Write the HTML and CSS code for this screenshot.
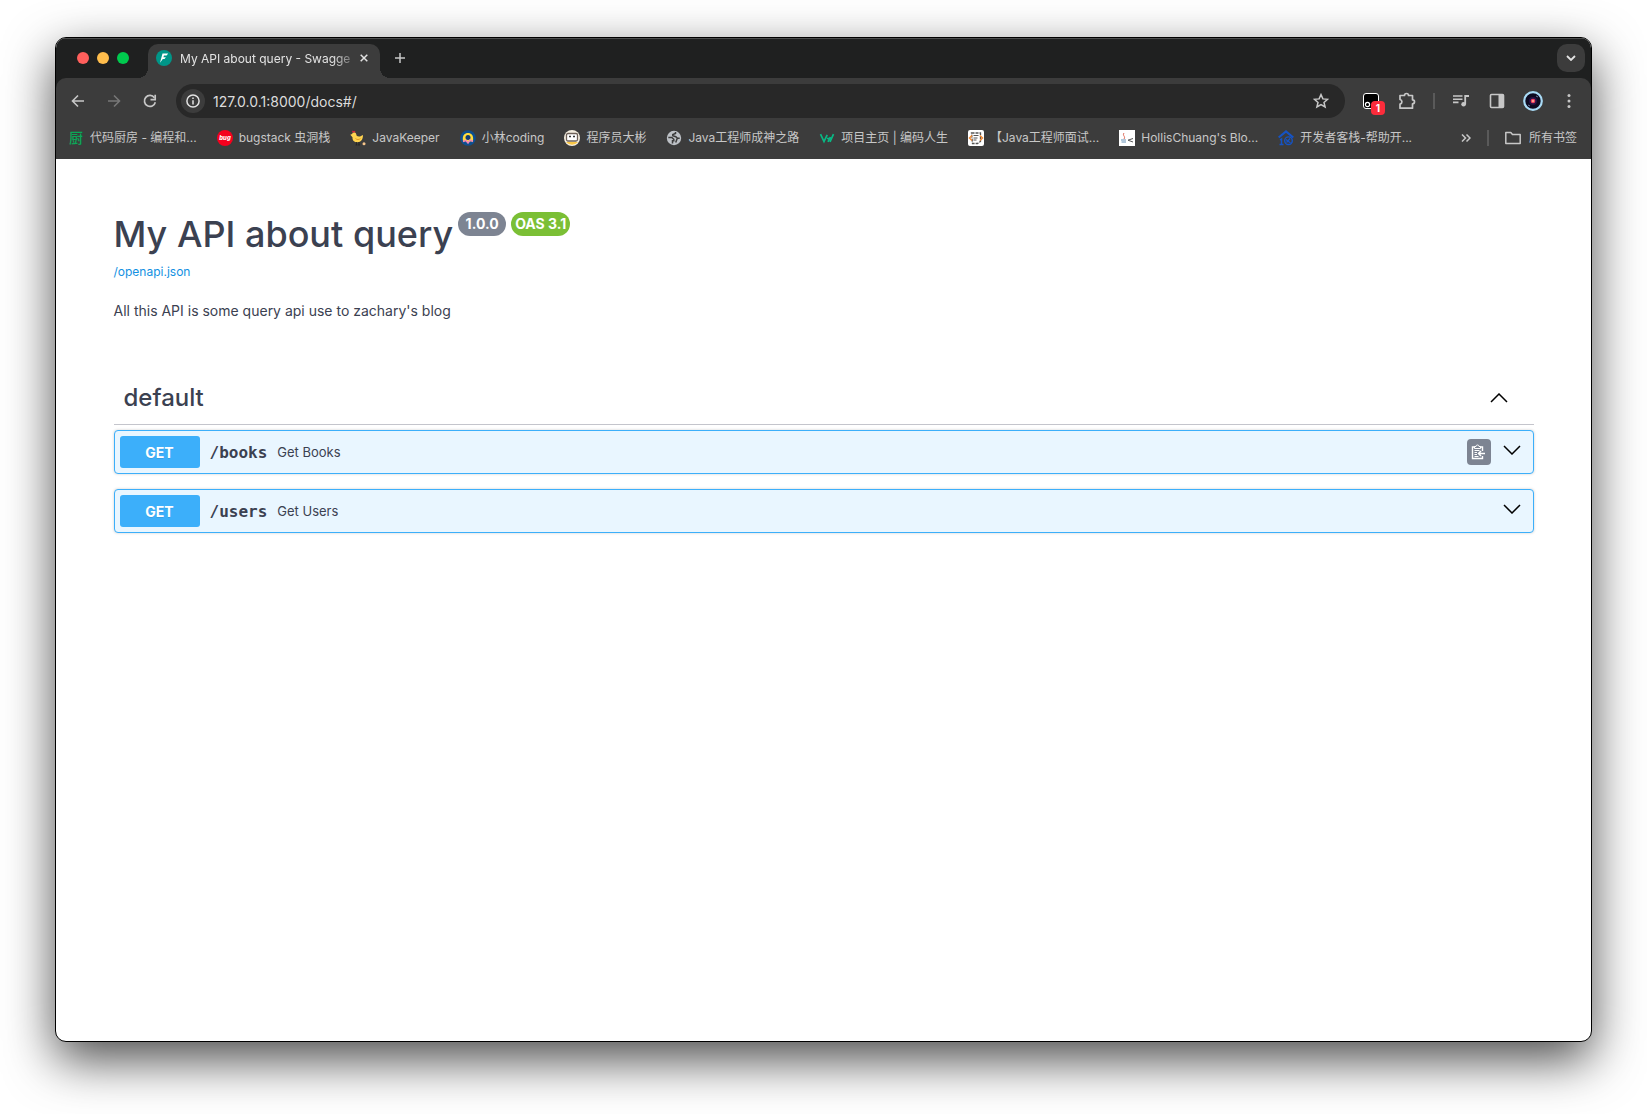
FILE: index.html
```html
<!DOCTYPE html>
<html lang="zh-CN">
<head>
    <meta charset="UTF-8">
    <meta name="viewport" content="width=device-width, initial-scale=1.0">
    <title>My API about query - Swagger UI</title>
    <link rel="stylesheet" href="styles.css">
</head>
<body>
    <div class="browser">
        <div class="chrome">
            <!-- Tab strip -->
            <div class="tab-strip">
                <div class="traffic-lights">
                    <span class="light red"></span>
                    <span class="light yellow"></span>
                    <span class="light green"></span>
                </div>
                <div class="tab">
                    <svg class="icon" viewBox="0 0 16 16"><circle cx="8" cy="8" r="8" fill="#009688"/><path d="M6.500 3.500h5.700l-1.600 2H8l-.6 1.700h2.500L8.500 9H6.800L4 12.800z" fill="#fff"/></svg>
                    <span class="tab-title">My API about query - Swagge</span>
                    <button class="tab-close" aria-label="Close tab">
                        <svg viewBox="0 0 8 8" width="8" height="8"><path d="M.7.7l6.600 6.600M7.300.7L.7 7.300" stroke="#e3e3e3" stroke-width="1.500"/></svg>
                    </button>
                </div>
                <button class="new-tab" aria-label="New tab">
                    <svg viewBox="0 0 10 10" width="10" height="10"><path d="M5 0v10M0 5h10" stroke="#c7c7c7" stroke-width="1.500"/></svg>
                </button>
                <button class="tab-search" aria-label="Search tabs">
                    <svg viewBox="0 0 10 6" width="10" height="6"><path d="M1 1l4 4 4-4" fill="none" stroke="#e3e3e3" stroke-width="1.800"/></svg>
                </button>
            </div>

            <!-- Toolbar -->
            <div class="toolbar">
                <button class="tool-btn" aria-label="Back">
                    <svg class="icon" viewBox="0 0 16 16"><path d="M14 8H3M8 2.500L2.500 8 8 13.500" fill="none" stroke="#c7c7c7" stroke-width="1.600"/></svg>
                </button>
                <button class="tool-btn" aria-label="Forward">
                    <svg class="icon" viewBox="0 0 16 16"><path d="M2 8h11M8 2.500L13.500 8 8 13.500" fill="none" stroke="#777" stroke-width="1.600"/></svg>
                </button>
                <button class="tool-btn" aria-label="Reload">
                    <svg class="icon" viewBox="0 0 16 16"><path d="M13.300 9.200A5.500 5.500 0 1 1 12.400 4.700" fill="none" stroke="#c7c7c7" stroke-width="1.700"/><path d="M13.200 1.700v5H8.500" fill="none" stroke="#c7c7c7" stroke-width="1.700"/></svg>
                </button>
                <div class="omnibox">
                    <button class="site-info" aria-label="Site information">
                        <svg viewBox="0 0 14 14" width="14" height="14"><circle cx="7" cy="7" r="6.100" fill="none" stroke="#e3e3e3" stroke-width="1.500"/><path d="M7 6.200v4.200M7 3.500v1.600" stroke="#e3e3e3" stroke-width="1.500"/></svg>
                    </button>
                    <input class="url" type="text" aria-label="Address" value="127.0.0.1:8000/docs#/">
                    <button class="star" aria-label="Bookmark this tab">
                        <svg class="icon" viewBox="0 0 16 16"><path d="M8 1.600l1.900 4.300 4.700.4-3.600 3.100 1.100 4.600L8 11.600 3.900 14 5 9.400 1.400 6.300l4.700-.4z" fill="none" stroke="#c7c7c7" stroke-width="1.500"/></svg>
                    </button>
                </div>
                <button class="tool-btn extension" aria-label="Extension">
                    <svg class="icon" viewBox="0 0 16 16"><rect x=".5" y=".5" width="15" height="15" rx="2.500" fill="#000" stroke="#fff"/><circle cx="4.500" cy="11.500" r="2.100" fill="none" stroke="#fff" stroke-width="1.200"/></svg>
                    <span class="ext-badge">1</span>
                </button>
                <button class="tool-btn" aria-label="Extensions">
                    <svg viewBox="0 0 18 18" width="18" height="18"><path d="M2 3.500h4.500a2 2 0 0 1 4 0h4v4.300a2 2 0 0 1 0 4v4.400H2v-4a2.400 2.400 0 0 0 0-4.700z" fill="none" stroke="#c7c7c7" stroke-width="1.700" stroke-linejoin="round"/></svg>
                </button>
                <span class="divider tool-divider"></span>
                <button class="tool-btn" aria-label="Media controls">
                    <svg class="icon" viewBox="0 0 16 16"><path d="M0 3h9.500M0 6.200h9.500M0 9.400h5.500" stroke="#c7c7c7" stroke-width="1.600"/><path d="M12.200 11V3H16" fill="none" stroke="#c7c7c7" stroke-width="1.800"/><circle cx="10.600" cy="11.200" r="2.300" fill="#c7c7c7"/></svg>
                </button>
                <button class="tool-btn" aria-label="Side panel">
                    <svg class="icon" viewBox="0 0 16 16"><rect x="1.500" y="1.500" width="13" height="13" rx="1" fill="none" stroke="#c7c7c7" stroke-width="1.600"/><path d="M9.500 1.500h5v13h-5z" fill="#c7c7c7"/></svg>
                </button>
                <button class="tool-btn" aria-label="Profile">
                    <svg viewBox="0 0 20 20" width="20" height="20"><circle cx="10" cy="10" r="8.800" fill="#0d0a20" stroke="#a8daf5" stroke-width="2.200"/><circle cx="10" cy="10" r="4" fill="#2a1245"/><circle cx="10" cy="10" r="2.300" fill="#f0405e"/><circle cx="10" cy="10" r="1" fill="#ffc29a"/><path d="M5 14l2 1M13 5l2 1" stroke="#6c7aa0"/></svg>
                </button>
                <button class="tool-btn" aria-label="Menu">
                    <svg class="icon" viewBox="0 0 16 16" fill="#c7c7c7"><circle cx="8" cy="2.500" r="1.500"/><circle cx="8" cy="8" r="1.500"/><circle cx="8" cy="13.500" r="1.500"/></svg>
                </button>
            </div>

            <!-- Bookmarks -->
            <nav class="bookmarks">
                <a href="#"><span class="icon glyph">厨</span>代码厨房 - 编程和...</a>
                <a href="#">
                    <svg class="icon" viewBox="0 0 16 16"><circle cx="8" cy="8" r="8" fill="#f5001d"/><text x="8" y="10" class="bug-text">bug</text></svg>bugstack 虫洞栈</a>
                <a href="#">
                    <svg class="icon" viewBox="0 0 16 16"><path d="M2 2.500L2.500.5 4 1.200 5 .8l.5 1.700z" fill="#d9263d"/><path d="M.3 4.800L2 4a2.200 2.200 0 0 1 4.300.3c0 1.500 1 2.200 2.700 2.200 1.500 0 2.500-.7 4-1.500 0 4.500-2 7.200-5.500 7.200-3.300 0-5.300-2-5-5z" fill="#ffd34f"/><path d="M5.500 8.500c1.500 1.500 3.500 1.300 5 0" fill="none" stroke="#e09c27"/><path d="M6.500 12v3M9 12v3M5.500 15h2M8 15h2" stroke="#222" stroke-width=".8"/><circle cx="14" cy="13.800" r="1.500" fill="#f7c58a"/></svg>JavaKeeper</a>
                <a href="#">
                    <svg class="icon" viewBox="0 0 16 16"><circle cx="8" cy="8" r="7.800" fill="#0d4f8f"/><path d="M3 11C2 5 5 3 8 3s6 2 5 8l-3 .5L8 13l-2-2z" fill="#ffdc3c"/><circle cx="8" cy="7.500" r="2.500" fill="#123d72"/><path d="M3 11.500l3-1 2 2.500 2-3 3 1.500" fill="none" stroke="#ef87b4" stroke-width="1.500"/></svg>小林coding</a>
                <a href="#">
                    <svg class="icon" viewBox="0 0 16 16"><circle cx="8" cy="8" r="8" fill="#f5eee0"/><path d="M2 12h12a8 8 0 0 1-12 0" fill="#f8c646"/><rect x="2.500" y="3.500" width="11" height="7.500" rx="1.500" fill="#fff" stroke="#6e6158" stroke-width="1.300"/><path d="M5 6.500h2M9 6.500h2" stroke="#333" stroke-width="1.400"/></svg>程序员大彬</a>
                <a href="#">
                    <svg class="icon" viewBox="0 0 16 16"><circle cx="8" cy="8" r="7.200" fill="#bdc1c6"/><path d="M2.300 7.500h3.500l2 1.800v1.400H6.500v2.800M9.500 2v1.500L6.800 4.500v1.300l3 .9 1.700 1.600h2.200M11.200 8.500l-1.500 4" fill="none" stroke="#3c3c3c" stroke-width="1.500"/></svg>Java工程师成神之路</a>
                <a href="#">
                    <svg class="icon" viewBox="0 0 16 16"><path d="M1.500 4.200L5 11.500 8.200 4.800M8 8.500h4M9 11.800L11.300 7M14.500 4.200L11 11.800" fill="none" stroke="#09b884" stroke-width="1.700"/></svg>项目主页 | 编码人生</a>
                <a href="#">
                    <svg class="icon" viewBox="0 0 16 16"><rect width="16" height="16" rx="2" fill="#fff"/><path d="M3.500 3h9v8.500l-3 2h-5z" fill="none" stroke="#555" stroke-width="1.300" stroke-dasharray="3 1"/><path d="M5.500 5.500h5M5.500 8h4M5.500 10h3" stroke="#555"/><path d="M4 5.500L1.500 8 4 10.500M12 5.500L14.500 8 12 10.500" fill="none" stroke="#f08a35" stroke-width="1.500"/></svg>【Java工程师面试...</a>
                <a href="#">
                    <svg class="icon" viewBox="0 0 16 16"><path d="M0 0h16v16H0z" fill="#fff"/><path d="M5 3c-2 3 2 3 0 6" fill="none" stroke="#e06b5a"/><path d="M2 10h5M2.500 12h4.500" stroke="#6490b5"/><path d="M14 8.500l-5 1.700 5 1.800" fill="none" stroke="#555"/></svg>HollisChuang's Blo...</a>
                <a href="#">
                    <svg class="icon" viewBox="0 0 16 16" fill="none" stroke="#1553c4"><path d="M.7 7.500L8 1.500l7.300 6" stroke-width="2.200"/><path d="M2 10l1.500-1v5.500M1.500 14.500h4" stroke-width="1.500"/><circle cx="10.500" cy="10.700" r="3.800" stroke-width="1.400"/><path d="M8 9.500l4.500 3.500M8.500 12.500L12 8.500" stroke-width="1.200"/></svg>开发者客栈-帮助开...</a>
                <div class="bookmarks-end">
                    <button aria-label="More bookmarks">
                        <svg viewBox="0 0 10 8" width="10" height="8"><path d="M1 .5L4.500 4 1 7.500M5.500.5L9 4 5.500 7.500" fill="none" stroke="#c7c7c7" stroke-width="1.500"/></svg>
                    </button>
                    <span class="divider"></span>
                    <a href="#" class="all-bookmarks">
                        <svg class="icon" viewBox="0 0 16 16"><path d="M.8 2.500h5l1.700 2h7.700v9H.8z" fill="none" stroke="#c7c7c7" stroke-width="1.500" stroke-linejoin="round"/></svg>所有书签</a>
                </div>
            </nav>
        </div>

        <!-- Swagger page -->
        <main class="page">
            <div class="info">
                <h1 class="title">My API about query
                    <span class="badges"><small class="version">1.0.0</small><small class="version oas">OAS 3.1</small></span>
                </h1>
                <a class="spec-link" href="/openapi.json">/openapi.json</a>
                <p class="description">All this API is some query api use to zachary's blog</p>
            </div>

            <section>
                <div class="tag-header">
                    <h2>default</h2>
                    <button class="arrow" aria-label="Collapse operation">
                        <svg viewBox="0 0 18 10" width="18" height="10"><path d="M1 9l8-8 8 8" fill="none" stroke="#000" stroke-width="1.500"/></svg>
                    </button>
                </div>
                <div class="opblock">
                    <button class="method">GET</button>
                    <span class="path">/books</span>
                    <span class="summary">Get Books</span>
                    <button class="copy" aria-label="Copy to clipboard">
                        <svg viewBox="0 0 15 16" width="15" height="16"><path d="M4 3H1.500v11.500h10V12M9 3h2.500v4" fill="none" stroke="#fff" stroke-width="1.400"/><path d="M3.500 4.500V2.500H5a1.500 1.500 0 0 1 3 0h1.500v2z" fill="#7d8492" stroke="#fff"/><path d="M3.500 6.500h5M3.500 8.500h2.500M3.500 10.500h2.500M3.500 12.500h4" stroke="#fff"/><path d="M14 9.500H8M10 7L7.500 9.500 10 12" fill="none" stroke="#fff" stroke-width="1.500"/></svg>
                    </button>
                    <button class="arrow" aria-label="Expand operation">
                        <svg viewBox="0 0 18 10" width="18" height="10"><path d="M1 1l8 8 8-8" fill="none" stroke="#000" stroke-width="1.500"/></svg>
                    </button>
                </div>
                <div class="opblock">
                    <button class="method">GET</button>
                    <span class="path">/users</span>
                    <span class="summary">Get Users</span>
                    <button class="arrow" aria-label="Expand operation">
                        <svg viewBox="0 0 18 10" width="18" height="10"><path d="M1 1l8 8 8-8" fill="none" stroke="#000" stroke-width="1.500"/></svg>
                    </button>
                </div>
            </section>
        </main>
    </div>
</body>
</html>
```
FILE: styles.css
```css
* {
    box-sizing: border-box;
}

body {
    font-family: Inter, "Noto Sans CJK SC", sans-serif;
    margin: 0;
    padding: 37px 55px 72px;
    min-height: 100vh;
    display: flex;
    background-color: #fff;
}

button {
    border: none;
    background: none;
    padding: 0;
    font-family: inherit;
    cursor: pointer;
    display: flex;
    align-items: center;
    justify-content: center;
}

svg {
    display: block;
    flex: none;
}

.browser {
    flex: 1;
    min-width: 0;
    border: 1px solid #000;
    border-radius: 11px;
    overflow: hidden;
    background: #fff;
    box-shadow: 0 18px 50px rgba(0, 0, 0, 0.7);
}

.chrome {
    background: #1f2020;
    box-shadow: inset 0 1px 0 #4c4d4d;
}

.icon {
    width: 16px;
    height: 16px;
    flex: none;
}

/* tab strip */
.tab-strip {
    display: flex;
    align-items: center;
    height: 40px;
    padding: 0 6px 0 21px;
}

.traffic-lights {
    display: flex;
    gap: 8px;
    margin-right: 19px;
}

.light {
    width: 12px;
    height: 12px;
    border-radius: 50%;
}

.red {
    background: #ff5f5c;
}

.yellow {
    background: #ffbd4c;
}

.green {
    background: #00ca4e;
}

.tab {
    position: relative;
    display: flex;
    align-items: center;
    width: 232px;
    height: 34px;
    margin-top: 6px;
    padding: 0 12px 6px 8px;
    border-radius: 10px 10px 0 0;
    background: #3c3c3c;
}

/* curved feet on both sides of the tab */
.tab::before,
.tab::after {
    content: "";
    position: absolute;
    bottom: 0;
    width: 10px;
    height: 10px;
}

.tab::before {
    left: -10px;
    background: radial-gradient(circle at 0 0, transparent 10px, #3c3c3c 10px);
}

.tab::after {
    right: -10px;
    background: radial-gradient(circle at 100% 0, transparent 10px, #3c3c3c 10px);
}

.tab-title {
    flex: 1;
    margin-left: 8px;
    white-space: nowrap;
    font-size: 12px;
    color: #e3e3e3;
    -webkit-mask-image: linear-gradient(90deg, #000 85%, transparent);
    mask-image: linear-gradient(90deg, #000 85%, transparent);
}

.new-tab {
    width: 28px;
    height: 28px;
    margin-left: 6px;
}

.tab-search {
    width: 28px;
    height: 28px;
    margin-left: auto;
    border-radius: 10px;
    background: #3c3c3c;
}

/* toolbar */
.toolbar {
    display: flex;
    align-items: center;
    height: 46px;
    padding: 0 4px;
    border-radius: 10px 10px 0 0;
    background: #3c3c3c;
}

.tool-btn {
    width: 36px;
    height: 34px;
    flex: none;
}

.omnibox {
    display: flex;
    align-items: center;
    flex: 1;
    height: 34px;
    margin: 0 8px;
    padding: 0 16px 0 5px;
    border-radius: 17px;
    background: #282828;
}

.site-info {
    width: 24px;
    height: 24px;
    border-radius: 50%;
    background: #3c3c3c;
}

.url {
    flex: 1;
    margin-left: 8px;
    padding: 0;
    border: none;
    outline: none;
    background: none;
    font-family: inherit;
    font-size: 14px;
    color: #dcdcdc;
}

.extension {
    position: relative;
}

.ext-badge {
    position: absolute;
    right: 4px;
    bottom: 3px;
    width: 14px;
    height: 14px;
    border-radius: 4px;
    background: #fb2c3b;
    color: #fff;
    font-size: 10px;
    font-weight: 700;
    line-height: 14px;
}

.divider {
    width: 2px;
    height: 16px;
    background: #5a5a5a;
    flex: none;
}

.tool-divider {
    margin: 0 8px;
}

/* bookmarks */
.bookmarks {
    display: flex;
    align-items: center;
    gap: 20px;
    height: 35px;
    padding: 0 14px 8px 12px;
    background: #3c3c3c;
}

.bookmarks a {
    display: flex;
    align-items: center;
    gap: 6px;
    font-size: 12px;
    line-height: 16px;
    white-space: nowrap;
    color: #c7c7c7;
    text-decoration: none;
}

.glyph {
    color: #0aa858;
    font-size: 14px;
    font-weight: 500;
    text-align: center;
}

.bug-text {
    font-size: 6px;
    font-weight: 800;
    font-style: italic;
    fill: #fff;
    text-anchor: middle;
}

.bookmarks-end {
    display: flex;
    align-items: center;
    gap: 16px;
    margin-left: auto;
}

.bookmarks .all-bookmarks {
    gap: 8px;
}

/* swagger page */
.page {
    max-width: 1460px;
    margin: 0 auto;
    padding: 50px 20px;
    color: #3b4151;
}

.info {
    margin-bottom: 50px;
}

.title {
    display: flex;
    align-items: flex-start;
    gap: 5px;
    margin: 0;
    font-size: 36px;
    font-weight: 500;
    line-height: 51px;
}

.badges {
    display: flex;
    gap: 5px;
    padding-top: 3px;
}

.version {
    min-width: 48px;
    padding: 0 4px;
    border-radius: 12px;
    background: #7d8492;
    color: #fff;
    font-size: 14px;
    font-weight: 700;
    line-height: 24px;
    text-align: center;
}

.oas {
    background: #7bbf35;
}

.spec-link {
    display: block;
    font-size: 12px;
    line-height: 24px;
    color: #1391e2;
    text-decoration: none;
}

.description {
    margin: 17px 0 0;
    font-size: 14px;
    line-height: 20px;
}

.tag-header {
    display: flex;
    align-items: center;
    justify-content: space-between;
    height: 54px;
    margin-bottom: 5px;
    padding: 0 26px 0 10px;
    border-bottom: 1px solid #c4c5cc;
}

.tag-header h2 {
    margin: 0;
    font-size: 24px;
    font-weight: 500;
}

.opblock {
    display: flex;
    align-items: center;
    height: 44px;
    margin-bottom: 15px;
    padding: 0 12px 0 5px;
    border: 1px solid #3caffa;
    border-radius: 4px;
    background: #e9f6ff;
    box-shadow: 0 0 3px rgba(0, 0, 0, 0.19);
}

.method {
    width: 80px;
    height: 32px;
    border-radius: 3px;
    background: #3caffa;
    color: #fff;
    font-size: 14px;
    font-weight: 700;
    text-shadow: 0 1px 0 rgba(0, 0, 0, 0.1);
}

.path {
    padding: 0 10px;
    font-family: "DejaVu Sans Mono", monospace;
    font-size: 16px;
    font-weight: 600;
}

.summary {
    font-size: 13px;
}

.copy {
    width: 24px;
    height: 26px;
    margin-left: auto;
    border-radius: 4px;
    background: #7d8492;
}

.opblock .arrow {
    margin-left: auto;
    padding-bottom: 4px;
}

.opblock .copy + .arrow {
    margin-left: 12px;
}
```
